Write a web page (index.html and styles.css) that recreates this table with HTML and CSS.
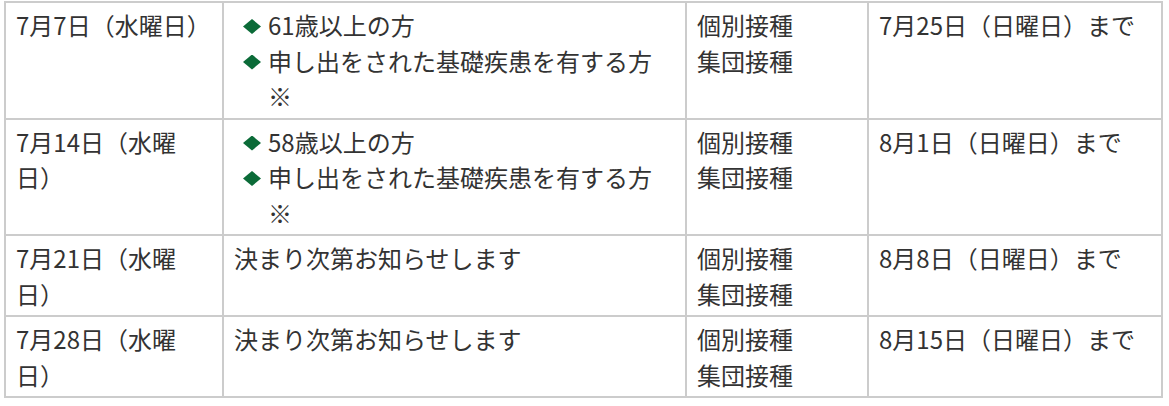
FILE: index.html
```
<!DOCTYPE html>
<html lang="ja">
<head>
<meta charset="utf-8">
<title>接種スケジュール</title>
<link rel="stylesheet" href="styles.css">
</head>
<body>
<table class="schedule">
  <colgroup>
    <col class="c-date">
    <col class="c-target">
    <col class="c-type">
    <col class="c-until">
  </colgroup>
  <tbody>
    <tr>
      <td>7月7日（水曜日）</td>
      <td>
        <ul class="targets">
          <li>61歳以上の方</li>
          <li>申し出をされた基礎疾患を有する方※</li>
        </ul>
      </td>
      <td>個別接種<br>集団接種</td>
      <td>7月25日（日曜日）まで</td>
    </tr>
    <tr>
      <td>7月14日（水曜日）</td>
      <td>
        <ul class="targets">
          <li>58歳以上の方</li>
          <li>申し出をされた基礎疾患を有する方※</li>
        </ul>
      </td>
      <td>個別接種<br>集団接種</td>
      <td>8月1日（日曜日）まで</td>
    </tr>
    <tr>
      <td>7月21日（水曜日）</td>
      <td>決まり次第お知らせします</td>
      <td>個別接種<br>集団接種</td>
      <td>8月8日（日曜日）まで</td>
    </tr>
    <tr>
      <td>7月28日（水曜日）</td>
      <td>決まり次第お知らせします</td>
      <td>個別接種<br>集団接種</td>
      <td>8月15日（日曜日）まで</td>
    </tr>
  </tbody>
</table>
</body>
</html>
```
FILE: styles.css
```
html, body {
  margin: 0;
  padding: 0;
  background: #fff;
}

body {
  padding: 1px 0 0 4px;
  font-family: "Noto Sans CJK JP", "Noto Sans", sans-serif;
  font-size: 24px;
  line-height: 35.5px;
  color: #333;
}

.schedule {
  border-collapse: collapse;
  table-layout: fixed;
  width: 1159px;
}

.c-date { width: 218px; }
.c-target { width: 463px; }
.c-type { width: 182px; }
.c-until { width: 294px; }

.schedule td {
  border: 2px solid #cccccc;
  padding: 4px 10px;
  vertical-align: top;
  text-align: left;
  text-spacing-trim: space-all;
}

.targets {
  list-style: none;
  margin: 0;
  padding: 0;
}

.targets li {
  display: flex;
  align-items: flex-start;
  padding-left: 9px;
  padding-right: 4px;
}

.targets li::before {
  content: "";
  flex: none;
  width: 18px;
  height: 15px;
  margin-top: 12px;
  margin-right: 7px;
  background: #0b6b38;
  clip-path: polygon(50% 0, 100% 50%, 50% 100%, 0 50%);
}
```
